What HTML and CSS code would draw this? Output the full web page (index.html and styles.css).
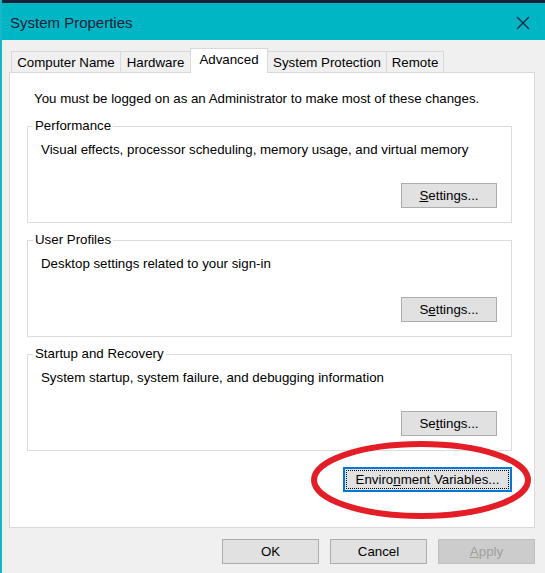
FILE: index.html
```html
<!DOCTYPE html>
<html>
    <head>
        <meta charset="UTF-8">
        <title>System Properties</title>
        <link rel="stylesheet" href="styles.css">
    </head>
    <body>
        <div class="topstrip"></div>

        <!-- Title bar -->
        <div class="titlebar">
            <span class="title">System Properties</span>
            <svg class="close" width="14" height="14" viewBox="0 0 14 14">
                <path d="M1 1 L13 13 M13 1 L1 13" stroke="#1d2340" stroke-width="1.2" fill="none"/>
            </svg>
        </div>

        <div class="dialog">
            <div class="tabs">
                <div class="tab">Computer Name</div>
                <div class="tab">Hardware</div>
                <div class="tab selected">Advanced</div>
                <div class="tab">System Protection</div>
                <div class="tab">Remote</div>
            </div>

            <div class="panel">
                <p class="notice">You must be logged on as an Administrator to make most of these changes.</p>

                <fieldset class="group">
                    <legend>Performance</legend>
                    <p class="desc">Visual effects, processor scheduling, memory usage, and virtual memory</p>
                    <div class="row"><button class="btn"><u>S</u>ettings...</button></div>
                </fieldset>

                <fieldset class="group">
                    <legend>User Profiles</legend>
                    <p class="desc">Desktop settings related to your sign-in</p>
                    <div class="row"><button class="btn">S<u>e</u>ttings...</button></div>
                </fieldset>

                <fieldset class="group">
                    <legend>Startup and Recovery</legend>
                    <p class="desc">System startup, system failure, and debugging information</p>
                    <div class="row"><button class="btn">Se<u>t</u>tings...</button></div>
                </fieldset>

                <div class="row env-row">
                    <button class="btn env"><span class="focus">Enviro<u>n</u>ment Variables...</span></button>
                </div>
            </div>

            <div class="footer">
                <button class="btn wide">OK</button>
                <button class="btn wide">Cancel</button>
                <button class="btn wide disabled"><u>A</u>pply</button>
            </div>
        </div>

        <!-- red marker drawn over the screenshot -->
        <svg class="marker" width="232" height="86" viewBox="0 0 232 86">
            <ellipse cx="115" cy="43" rx="107" ry="36" fill="none" stroke="#e41e26" stroke-width="6"/>
        </svg>
    </body>
</html>
```

FILE: styles.css
```css
* {
    box-sizing: border-box;
}

body {
    margin: 0;
    width: 545px;
    height: 573px;
    overflow: hidden;
    position: relative;
    background-color: #f0f0f0;
    border-left: 2px solid #16b8c6;
    font-family: "Liberation Sans", Arial, sans-serif;
    font-size: 13.3px;
    color: #000;
}

.topstrip {
    height: 3px;
    margin-left: -2px;
    background-color: #1b2039;
}

.titlebar {
    height: 37px;
    margin-left: -2px;
    padding: 0 15px 0 10px;
    display: flex;
    align-items: center;
    justify-content: space-between;
    background-color: #00b6c4;
}

.title {
    font-size: 15px;
    color: #1b2039;
    padding-top: 1px;
}

.close {
    margin-top: 2px;
}

.dialog {
    padding: 8px 10px 0 7px;
}

/* tab strip */
.tabs {
    display: flex;
    align-items: flex-end;
    height: 24px;
    padding-left: 2px;
}

.tab {
    height: 21px;
    display: flex;
    align-items: center;
    justify-content: center;
    border: 1px solid #d9d9d9;
    border-bottom: none;
    margin-right: -1px;
    background-color: #f0f0f0;
    white-space: nowrap;
}

.tab:nth-child(1) { width: 110px; }
.tab:nth-child(2) { width: 71px; }
.tab:nth-child(3) { width: 78px; }
.tab:nth-child(4) { width: 120px; }
.tab:nth-child(5) { width: 58px; }

.tab.selected {
    height: 25px;
    margin-bottom: -1px;
    padding-bottom: 3px;
    background-color: #fff;
    position: relative;
    z-index: 1;
}

/* main page */
.panel {
    width: 526px;
    height: 456px;
    background-color: #fff;
    border: 1px solid #d9d9d9;
    padding: 18px 22px 0 17px;
}

.notice {
    margin: 0 0 12px 7px;
    line-height: 16px;
}

.group {
    margin: 0 0 10px 0;
    padding: 0 14px 14px 13px;
    border: 1px solid #dcdcdc;
    min-width: 0;
}

.group legend {
    padding: 0 2px;
    margin-left: -8px;
    line-height: 14px;
}

.desc {
    margin: 9px 0 25px 0;
    line-height: 16px;
}

.row {
    display: flex;
    justify-content: flex-end;
}

.btn {
    height: 25px;
    width: 96px;
    padding: 0;
    font-family: "Liberation Sans", Arial, sans-serif;
    font-size: 13.3px;
    color: #000;
    background-color: #e1e1e1;
    border: 1px solid #adadad;
}

.env-row {
    margin-top: 16px;
}

.btn.env {
    width: 169px;
    height: 25px;
    padding: 1px;
    border: 2px solid #0078d7;
}

.focus {
    display: flex;
    align-items: center;
    justify-content: center;
    height: 100%;
    border: 1px dotted #000;
}

.footer {
    display: flex;
    justify-content: flex-end;
    gap: 11px;
    margin-top: 11px;
}

.btn.wide {
    width: 97px;
}

.btn.disabled {
    color: #a0a0a0;
    background-color: #cccccc;
    border-color: #bfbfbf;
}

.marker {
    position: absolute;
    left: 304px;
    top: 437px;
}
```
